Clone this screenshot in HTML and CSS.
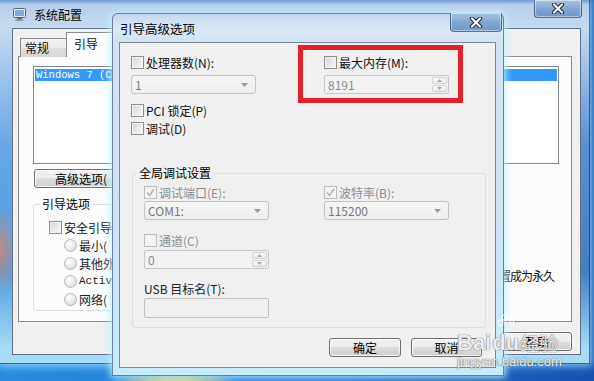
FILE: index.html
```html
<!DOCTYPE html>
<html lang="zh-CN">
<head>
  <meta charset="UTF-8" />
  <title>系统配置 - 引导高级选项</title>
  <link rel="stylesheet" href="styles.css">
</head>
<body>

<div class="desktop">

  <!-- back window: 系统配置 (mostly hidden behind the dialog) -->
  <div class="win sysconfig">
    <div class="titlebar">
      <svg class="app-icon" width="13" height="13" viewBox="0 0 13 13">
        <rect x="0.5" y="0.5" width="12" height="9" rx="1" fill="#e8eef5" stroke="#5a6470"/>
        <rect x="2" y="2" width="9" height="6" fill="#7fa9d8"/>
        <rect x="4" y="10" width="5" height="1.5" fill="#5a6470"/>
        <rect x="2.5" y="11.5" width="8" height="1.5" fill="#8a939c"/>
      </svg>
      <span class="title">系统配置</span>
      <div class="close back-close">
        <svg width="14" height="11" viewBox="0 0 14 11"><path d="M3 1.5 L11 9.5 M11 1.5 L3 9.5" stroke="#1d2b3c" stroke-width="4.2" stroke-linecap="round"/><path d="M3 1.5 L11 9.5 M11 1.5 L3 9.5" stroke="#fff" stroke-width="2.2" stroke-linecap="round"/></svg>
      </div>
    </div>
    <div class="client">
      <div class="tabs">
        <div class="tab">常规</div>
        <div class="tab active">引导</div>
      </div>
      <div class="tabpanel">
        <div class="oslist">
          <div class="os-item">Windows 7 (C</div>
        </div>
        <button class="btn adv-open">高级选项(</button>
        <div class="boot-lower">
          <fieldset class="group boot-opts">
            <legend>引导选项</legend>
            <div class="chk"><span class="cb"></span><span>安全引导</span></div>
            <div class="radios">
              <div class="chk"><span class="rb"></span><span>最小(</span></div>
              <div class="chk"><span class="rb"></span><span>其他外</span></div>
              <div class="chk latin"><span class="rb"></span><span>Activ</span></div>
              <div class="chk"><span class="rb"></span><span>网络(</span></div>
            </div>
          </fieldset>
          <div class="perm">置成为永久</div>
        </div>
      </div>
      <div class="foot">
        <button class="btn help-btn">帮助</button>
      </div>
    </div>
  </div>

  <!-- front dialog: 引导高级选项 -->
  <div class="win adv">
    <div class="titlebar">
      <span class="title">引导高级选项</span>
      <div class="close adv-close">
        <svg width="14" height="11" viewBox="0 0 14 11"><path d="M3 1.5 L11 9.5 M11 1.5 L3 9.5" stroke="#1d2b3c" stroke-width="4.2" stroke-linecap="round"/><path d="M3 1.5 L11 9.5 M11 1.5 L3 9.5" stroke="#fff" stroke-width="2.2" stroke-linecap="round"/></svg>
      </div>
    </div>
    <div class="adv-client">
      <div class="top-grid">
        <div class="field">
          <div class="chk"><span class="cb"></span><span>处理器数(N):</span></div>
          <div class="combo">
            <span>1</span>
            <svg width="7" height="4" viewBox="0 0 7 4"><path d="M0 0 H7 L3.5 4 Z" fill="#9a9a9a"/></svg>
          </div>
        </div>
        <div class="field">
          <div class="chk"><span class="cb"></span><span>最大内存(M):</span></div>
          <div class="spin">
            <span class="spin-val">8191</span>
            <span class="spin-btns">
              <span class="spin-up"><svg width="5" height="3" viewBox="0 0 5 3"><path d="M0 3 H5 L2.5 0 Z" fill="#a8a8a8"/></svg></span>
              <span class="spin-down"><svg width="5" height="3" viewBox="0 0 5 3"><path d="M0 0 H5 L2.5 3 Z" fill="#a8a8a8"/></svg></span>
            </span>
          </div>
        </div>
      </div>

      <div class="chk pci"><span class="cb"></span><span>PCI 锁定(P)</span></div>
      <div class="chk"><span class="cb"></span><span>调试(D)</span></div>

      <fieldset class="group dbg">
        <legend>全局调试设置</legend>
        <div class="dbg-cols">
          <div class="dbg-col">
            <div class="chk dis"><span class="cb dis"><svg width="11" height="11" viewBox="0 0 11 11"><path d="M2 5.5 L4.5 8.5 L9 2" stroke="#b4b4b4" stroke-width="1.6" fill="none"/></svg></span><span>调试端口(E):</span></div>
            <div class="combo">
              <span>COM1:</span>
              <svg width="7" height="4" viewBox="0 0 7 4"><path d="M0 0 H7 L3.5 4 Z" fill="#9a9a9a"/></svg>
            </div>
            <div class="chk dis channel"><span class="cb dis"></span><span>通道(C)</span></div>
            <div class="spin tight">
              <span class="spin-val">0</span>
              <span class="spin-btns">
                <span class="spin-up"><svg width="5" height="3" viewBox="0 0 5 3"><path d="M0 3 H5 L2.5 0 Z" fill="#a8a8a8"/></svg></span>
                <span class="spin-down"><svg width="5" height="3" viewBox="0 0 5 3"><path d="M0 0 H5 L2.5 3 Z" fill="#a8a8a8"/></svg></span>
              </span>
            </div>
            <div class="usb-label">USB 目标名(T):</div>
            <div class="textbox"></div>
          </div>
          <div class="dbg-col">
            <div class="chk dis"><span class="cb dis"><svg width="11" height="11" viewBox="0 0 11 11"><path d="M2 5.5 L4.5 8.5 L9 2" stroke="#b4b4b4" stroke-width="1.6" fill="none"/></svg></span><span>波特率(B):</span></div>
            <div class="combo">
              <span>115200</span>
              <svg width="7" height="4" viewBox="0 0 7 4"><path d="M0 0 H7 L3.5 4 Z" fill="#9a9a9a"/></svg>
            </div>
          </div>
        </div>
      </fieldset>

      <div class="dlg-buttons">
        <button class="btn ok">确定</button>
        <button class="btn cancel">取消</button>
      </div>
    </div>
  </div>

  <!-- red marker drawn over the screenshot -->
  <div class="highlight"></div>

  <!-- watermark -->
  <div class="watermark">
    <div class="wm-logo">
      <span class="wm-bai">Bai</span>
      <span class="wm-du">
        <svg class="wm-paw" width="17" height="18" viewBox="0 0 17 18">
          <ellipse cx="3.5" cy="9" rx="2.2" ry="3" fill="none" stroke="#fff" stroke-width="1.3"/>
          <ellipse cx="7" cy="3.5" rx="2.2" ry="2.6" fill="none" stroke="#fff" stroke-width="1.3"/>
          <ellipse cx="12" cy="3.5" rx="2.2" ry="2.6" fill="none" stroke="#fff" stroke-width="1.3"/>
          <ellipse cx="15" cy="9" rx="1.8" ry="2.8" fill="none" stroke="#fff" stroke-width="1.3"/>
        </svg>
        <span class="du-text">du</span>
      </span>
      <span class="wm-jy">经验</span>
    </div>
    <div class="wm-url">jingyan.baidu.com</div>
  </div>

</div>

</body>
</html>
```

FILE: styles.css
```css
* {
  box-sizing: border-box;
}

body {
  margin: 0;
  font-family: "Noto Sans CJK SC", "Liberation Sans", sans-serif;
  font-size: 12px;
  color: #111;
}

.desktop {
  position: relative;
  width: 594px;
  height: 381px;
  overflow: hidden;
  background:
    radial-gradient(ellipse 75px 22px at 175px 392px, #fffbd0 0%, #f6e36a 45%, rgba(246, 227, 106, 0) 100%),
    radial-gradient(ellipse 22px 45px at 0 250px, #f06a2a 0%, rgba(240, 106, 42, 0) 100%),
    linear-gradient(90deg, #2b8be0 0%, #2178d4 50%, #1552b0 100%);
}

/* window frames */
.win {
  position: absolute;
  display: flex;
  flex-direction: column;
}

.titlebar {
  height: 28px;
  display: flex;
  align-items: center;
  flex-shrink: 0;
}

.title {
  font-size: 12px;
  color: #000;
}

.close {
  margin-left: auto;
  align-self: flex-start;
  display: flex;
  align-items: center;
  justify-content: center;
  border: 1px solid rgba(30, 50, 80, 0.55);
  border-top: none;
  border-radius: 0 0 4px 4px;
  background: linear-gradient(#a9c4e4, #7ea4d2 55%, #6d97cb);
  box-shadow: inset 0 0 0 1px rgba(255, 255, 255, 0.45);
}

.sysconfig {
  z-index: 0;
  left: 0;
  top: 0;
  width: 590px;
  height: 364px;
  padding: 0 8px 8px 12px;
  border-right: 1px solid rgba(20, 40, 80, 0.6);
  border-bottom: 1px solid rgba(20, 40, 80, 0.5);
  background: linear-gradient(180deg, #6f9bd0 0px, #b7cfea 5px, #c6daef 28px, rgba(150, 190, 235, 0.55) 40%, rgba(120, 180, 230, 0.45) 75%, #a6dcf4 96%);
  box-shadow: 0 0 8px 2px rgba(170, 235, 255, 0.8);
}

.sysconfig .app-icon {
  margin-left: 1px;
  margin-right: 8px;
}

.back-close {
  width: 48px;
  height: 18px;
  margin-right: -1px;
}

.client {
  flex: 1;
  background-color: #f0f0f0;
  border: 1px solid #5f7186;
  padding: 4px 8px 0 5px;
}

.tabs {
  display: flex;
  align-items: flex-end;
  height: 24px;
  padding-left: 2px;
  margin-bottom: -1px;
  position: relative;
  z-index: 1;
}

.tab {
  width: 47px;
  height: 19px;
  border: 1px solid #898c95;
  border-bottom: none;
  padding-left: 4px;
  line-height: 17px;
  background: linear-gradient(#f3f3f3, #ebebeb 50%, #dedede 50%, #d6d6d6);
}

.tab.active {
  height: 25px;
  margin-left: -1px;
  padding-left: 7px;
  line-height: 22px;
  background-color: #fcfcfc;
  background-image: none;
}

.tabpanel {
  height: 266px;
  border: 1px solid #898c95;
  background-color: #fcfcfc;
  padding: 9px 12px 0 14px;
}

.oslist {
  height: 98px;
  border: 1px solid #828790;
  background-color: #fff;
  padding: 2px 1px;
}

.os-item {
  height: 12px;
  line-height: 12px;
  padding-left: 1px;
  background-color: #3399ff;
  color: #fff;
  font-family: "Liberation Mono", "Noto Sans CJK SC", monospace;
  font-size: 10.5px;
  white-space: nowrap;
}

.btn {
  height: 19px;
  padding: 0;
  border: 1px solid #707070;
  border-radius: 3px;
  background: linear-gradient(#f2f2f2, #ebebeb 50%, #dddddd 50%, #cfcfcf);
  box-shadow: inset 0 0 0 1px rgba(255, 255, 255, 0.7);
  font-family: "Noto Sans CJK SC", "Liberation Sans", sans-serif;
  font-size: 12px;
  line-height: 17px;
  color: #000;
}

.adv-open {
  display: block;
  width: 120px;
  margin: 5px 0 0 1px;
  padding-left: 20px;
  text-align: left;
}

.boot-lower {
  display: flex;
  justify-content: space-between;
  margin-top: 8px;
}

/* group boxes */
.group {
  margin: 0;
  padding: 0;
  min-width: 0;
  border: 1px solid #d5dfe5;
  border-radius: 3px;
}

.group legend {
  padding: 0 2px;
  line-height: 16px;
  color: #000;
}

.boot-opts {
  width: 110px;
  padding: 6px 0 2px 15px;
}

.boot-opts legend {
  margin-left: -9px;
}

.radios {
  padding-left: 15px;
  color: #222;
}

.perm {
  margin-top: 71px;
  padding-right: 5px;
  letter-spacing: -1px;
  white-space: nowrap;
}

.foot {
  display: flex;
  justify-content: flex-end;
  margin-top: 10px;
}

.help-btn {
  width: 70px;
}

/* front dialog */
.adv {
  z-index: 1;
  left: 112px;
  top: 13px;
  width: 392px;
  height: 363px;
  padding: 0 7px 7px 6px;
  border: 1px solid rgba(30, 50, 80, 0.55);
  border-radius: 6px 6px 0 0;
  background: linear-gradient(180deg, #c4d7ec 0px, #dce8f5 14px, #d2e2f2 28px, #cfe3f3 60%, #c5ecf9 100%);
  box-shadow: 0 0 7px 2px rgba(190, 245, 255, 0.85);
}

.adv .titlebar {
  padding-left: 1px;
}

.adv .title {
  font-size: 12.5px;
}

.adv-close {
  width: 52px;
  height: 19px;
  margin-right: -6px;
  margin-top: -1px;
}

.adv-client {
  flex: 1;
  background-color: #f0f0f0;
  border: 1px solid #7c8794;
  padding: 10px 13px 0 11px;
}

.top-grid {
  display: grid;
  grid-template-columns: 193px 125px;
}

.chk {
  display: flex;
  align-items: center;
  gap: 2px;
  height: 18px;
  white-space: nowrap;
}

.chk.dis {
  color: #8d8d8d;
}

.latin {
  font-family: "Liberation Mono", "Noto Sans CJK SC", monospace;
  font-size: 11px;
}

.cb {
  display: flex;
  align-items: center;
  justify-content: center;
  width: 13px;
  height: 13px;
  flex-shrink: 0;
  border: 1px solid #8e8f8f;
  background: linear-gradient(135deg, #cdd1d7 0%, #e9eaec 55%, #f8f8f8 100%);
  box-shadow: inset 0 0 0 1px #f2f2f2;
}

.cb.dis {
  border-color: #bdbdbd;
  background: #f4f4f4;
  box-shadow: none;
}

.rb {
  width: 13px;
  height: 13px;
  flex-shrink: 0;
  border: 1px solid #b9b9b9;
  border-radius: 50%;
  background: radial-gradient(circle at 40% 35%, #ffffff 0%, #e6e6e6 60%, #d3d3d3 100%);
}

.combo {
  display: flex;
  align-items: center;
  justify-content: space-between;
  width: 125px;
  height: 19px;
  padding: 0 7px 0 3px;
  border: 1px solid #c3c3c3;
  border-radius: 3px;
  background: linear-gradient(#f6f6f6, #eeeeee);
  color: #7a7a7a;
  line-height: 17px;
}

.top-grid .combo {
  margin-top: 4px;
}

.spin {
  display: flex;
  width: 125px;
  height: 19px;
  margin-top: 4px;
  border: 1px solid #c8c8c8;
  border-radius: 2px;
  background-color: #f3f3f3;
  color: #8a8a8a;
}

.spin.tight {
  margin-top: 1px;
}

.spin-val {
  flex: 1;
  padding-left: 3px;
  line-height: 17px;
}

.spin-btns {
  display: flex;
  flex-direction: column;
  width: 17px;
  padding: 1px;
  gap: 1px;
}

.spin-btns span {
  flex: 1;
  display: flex;
  align-items: center;
  justify-content: center;
  border: 1px solid #d2d2d2;
  border-radius: 2px;
  background: linear-gradient(#f8f8f8, #ececec);
}

.pci {
  margin-top: 7px;
}

.dbg {
  width: 354px;
  margin-top: 28px;
  margin-left: 1px;
}

.dbg legend {
  margin-left: 4px;
}

.dbg-cols {
  display: flex;
  padding: 2px 0 9px 11px;
}

.dbg-col:first-child {
  width: 180px;
}

.channel {
  margin-top: 11px;
}

.usb-label {
  height: 18px;
  line-height: 18px;
  margin-top: 11px;
  color: #222;
}

.textbox {
  width: 125px;
  height: 20px;
  border: 1px solid #c3c3c3;
  border-radius: 2px;
  background-color: #f0f0f0;
}

.dlg-buttons {
  display: flex;
  justify-content: flex-end;
  gap: 10px;
  margin-top: 10px;
}

.ok {
  width: 72px;
}

.cancel {
  width: 71px;
}

/* red marker over the dialog */
.highlight {
  position: absolute;
  z-index: 2;
  left: 298px;
  top: 45px;
  width: 165px;
  height: 58px;
  border: 5px solid #e2222b;
}

/* watermark */
.watermark {
  position: absolute;
  z-index: 3;
  left: 457px;
  top: 313px;
  color: rgba(255, 255, 255, 0.88);
  text-shadow: 0 0 1px #6a6a6a, 0 0 1px #6a6a6a;
  pointer-events: none;
}

.wm-logo {
  display: flex;
  align-items: flex-end;
  height: 40px;
}

.wm-bai,
.du-text {
  font-family: "Liberation Sans", sans-serif;
  font-weight: bold;
  font-size: 22px;
  line-height: 20px;
}

.wm-du {
  display: flex;
  flex-direction: column;
  align-items: center;
  margin-left: 1px;
}

.wm-paw {
  opacity: 0.85;
  margin-bottom: 1px;
}

.wm-jy {
  font-size: 19px;
  line-height: 20px;
  margin-left: 1px;
}

.wm-url {
  font-family: "Liberation Sans", sans-serif;
  font-size: 13px;
  line-height: 12px;
  margin-top: 3px;
}
```
